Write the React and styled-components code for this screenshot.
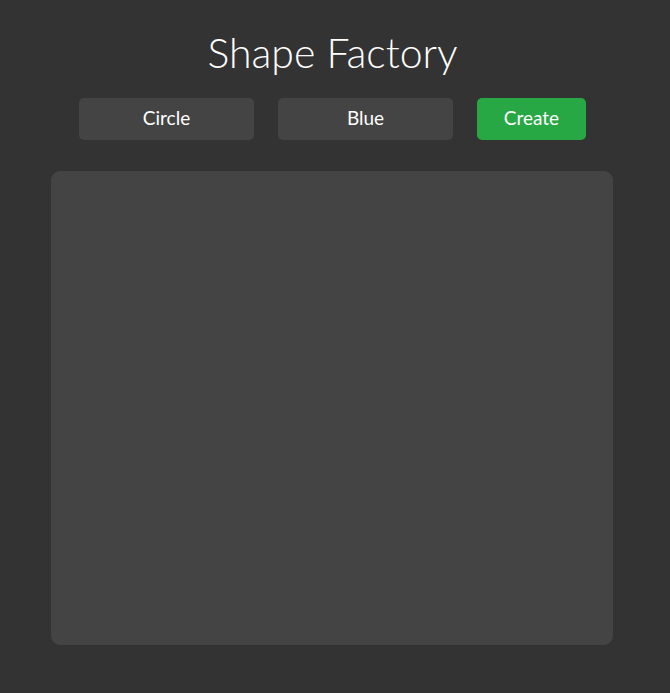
import React from "react";
import styled, { createGlobalStyle } from "styled-components";

const Global = createGlobalStyle`
  html, body { margin: 0; padding: 0; background: #333333; }
  body { font-family: "Lato", "Noto Sans", sans-serif; color: #ffffff; }
`;

const Page = styled.div`
  display: flex;
  flex-direction: column;
  align-items: center;
  padding-top: 26px;
  padding-right: 5px;
`;

const Title = styled.h1`
  margin: 0;
  font-size: 41px;
  font-weight: 300;
  line-height: 54px;
  color: #ffffff;
`;

const Controls = styled.div`
  display: flex;
  gap: 24px;
  margin-top: 18px;
`;

const Button = styled.button`
  width: ${(p) => p.$w}px;
  height: 42px;
  border: none;
  border-radius: 5px;
  background: ${(p) => (p.$primary ? "#28a745" : "#444444")};
  color: #ffffff;
  font-family: "Lato", "Noto Sans", sans-serif;
  font-size: 19px;
  padding: 0 0 3px;
  cursor: pointer;
`;

const Canvas = styled.div`
  margin-top: 31px;
  margin-right: 2px;
  width: 562px;
  height: 474px;
  background: #444444;
  border-radius: 9px;
`;

export default function App() {
  return (
    <>
      <Global />
      <Page>
        <Title>Shape Factory</Title>
        <Controls>
          <Button $w={175}>Circle</Button>
          <Button $w={175}>Blue</Button>
          <Button $w={109} $primary>Create</Button>
        </Controls>
        <Canvas />
      </Page>
    </>
  );
}
